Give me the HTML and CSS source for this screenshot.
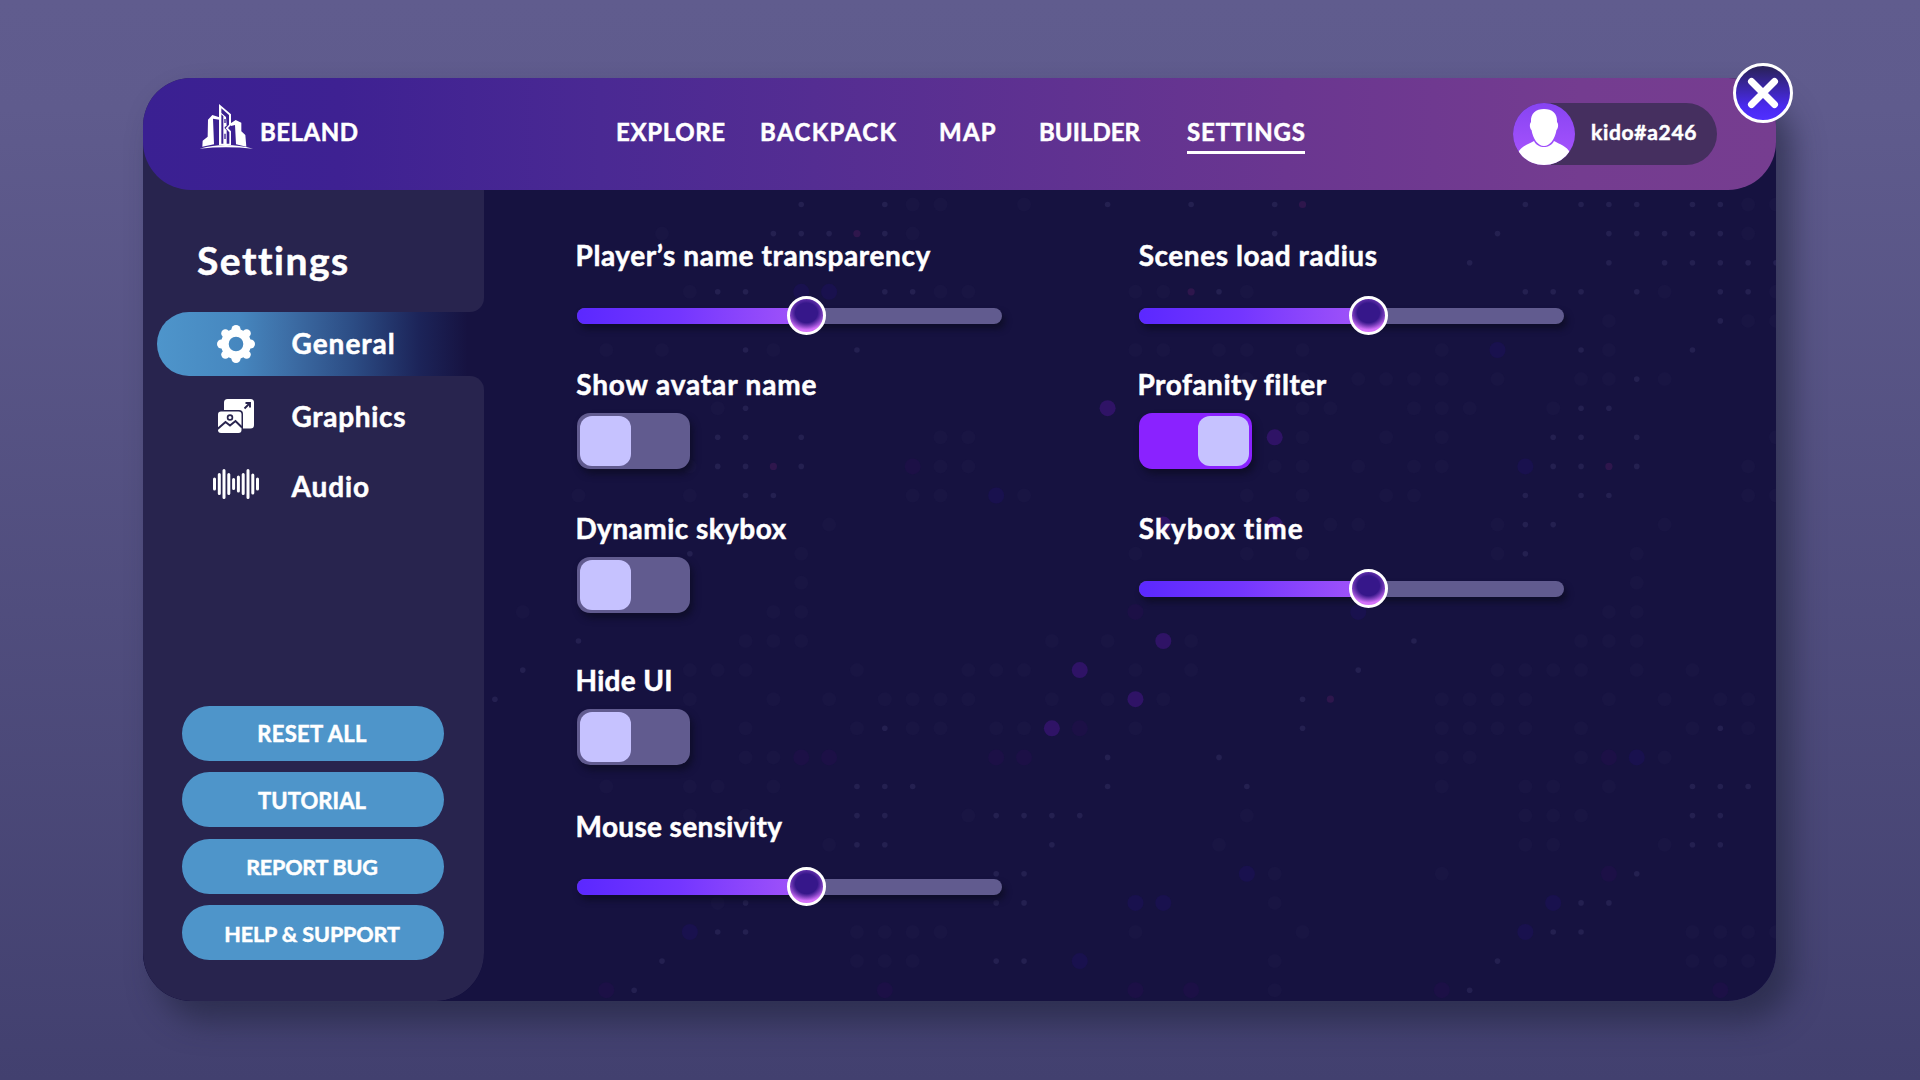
FILE: index.html
```html
<!DOCTYPE html>
<html lang="en">
<head>
<meta charset="utf-8">
<title>Beland – Settings</title>
<link rel="stylesheet" href="styles.css">
</head>
<body>
<div class="panel">
  <header class="topbar">
    <a class="brand">
      <svg class="brand-logo" viewBox="210 128 165 140" aria-hidden="true">
        <g fill="#fff">
          <path d="M237 178 250 164 271 171V178L252 175 255 252 220 259 221 241 236 229Z"/>
          <path d="M303 190 320 179 337 187V213L349 224 352 259 321 252 318 194 306 197Z"/>
          <path d="M270 131 306 162V194L297 203 306 213V254H270ZM277 144V250H283V168L277 162V158L291 170 293 196 287 200V204L293 210V250H301V216L290 204 300 193V164Z" fill-rule="evenodd"/>
          <path d="M212 265Q290 243 372 265Q290 257 212 265Z"/>
        </g>
        <path d="M288 176V188M288 220V236" stroke="#3b1f90" stroke-width="4"/>
      </svg>
      <span class="brand-name">BELAND</span>
    </a>
    <nav class="nav">
      <a class="nav-link explore">EXPLORE</a>
      <a class="nav-link backpack">BACKPACK</a>
      <a class="nav-link map">MAP</a>
      <a class="nav-link builder">BUILDER</a>
      <a class="nav-link settings is-active">SETTINGS</a>
    </nav>
    <div class="user">
      <svg class="avatar" viewBox="0 0 62 62" aria-hidden="true">
        <defs>
          <linearGradient id="av" x1="0" y1="0" x2="0" y2="1"><stop offset="0" stop-color="#8744f2"/><stop offset="1" stop-color="#ab55ff"/></linearGradient>
          <clipPath id="avc"><circle cx="31" cy="31" r="31"/></clipPath>
        </defs>
        <circle cx="31" cy="31" r="31" fill="url(#av)"/>
        <path clip-path="url(#avc)" fill="#fff" d="M5 50C8 43 16 41 21 38C25 46 37 46 41 38C46 41 54 43 57 50V62H5Z"/>
        <path fill="#fff" d="M31 6C39 6 44.500 10 44 19C46 21 45 26 43.500 27C42 36 37 43 31 43C25 43 20 36 18.500 27C17 26 16 21 18 19C17.500 10 23 6 31 6Z"/>
      </svg>
      <span class="user-name">kido#a246</span>
    </div>
  </header>

  <aside class="sidebar">
    <div class="sidebar-head"><h1 class="title">Settings</h1></div>
    <div class="tab-slot">
      <a class="tab is-active">
        <svg class="tab-icon" viewBox="-24 -24 48 48" aria-hidden="true">
          <circle r="11.200" fill="none" stroke="#fff" stroke-width="7.800"/>
          <g fill="#fff"><circle cy="-14.400" r="4.600"/><circle cy="14.400" r="4.600"/><circle cx="-14.400" r="4.600"/><circle cx="14.400" r="4.600"/><circle cx="10.600" cy="10.600" r="4.200"/><circle cx="-10.600" cy="10.600" r="4.200"/><circle cx="10.600" cy="-10.600" r="4.200"/><circle cx="-10.600" cy="-10.600" r="4.200"/></g>
        </svg>
        <span class="tab-label general">General</span>
      </a>
    </div>
    <div class="sidebar-body">
      <a class="tab">
        <svg class="tab-icon" viewBox="-24 -24 48 48" aria-hidden="true">
          <rect x="-12" y="-17" width="30" height="29.500" rx="3.500" fill="#fff"/>
          <path d="M8.500-7.500 13.500-12.500M9.500-13H14V-8.500" fill="none" stroke="#28244e" stroke-width="1.900"/>
          <rect x="-19" y="-6" width="26" height="24" rx="4" fill="#28244e"/>
          <rect x="-18" y="-4.500" width="23.500" height="21.500" rx="3" fill="#fff"/>
          <path d="M-18.500 13-10.500 6-6 9.500-.5 5 6 11.500" fill="none" stroke="#28244e" stroke-width="2"/>
          <circle cx="-6" cy="1.500" r="2.400" fill="none" stroke="#28244e" stroke-width="1.700"/>
        </svg>
        <span class="tab-label graphics">Graphics</span>
      </a>
      <a class="tab audio-tab">
        <svg class="tab-icon" viewBox="-24 -24 48 48" aria-hidden="true">
          <path d="M-21.500-5V5M-16.700-9.500V9.500M-12-13.500V13.500M-7.200-9.500V9.500M-2.400-4.500V4.500M2.400-7V7M7.200-9.500V9.500M12-13.500V13.500M16.800-9V9M21.500-5V5" stroke="#fff" stroke-width="3" stroke-linecap="round"/>
        </svg>
        <span class="tab-label audio">Audio</span>
      </a>
      <div class="actions">
        <button class="action reset">RESET ALL</button>
        <button class="action tutorial">TUTORIAL</button>
        <button class="action report">REPORT BUG</button>
        <button class="action help">HELP &amp; SUPPORT</button>
      </div>
    </div>
  </aside>

  <main class="content">
    <svg class="dots" viewBox="484 190 1292 811" aria-hidden="true"></svg>
    <section class="settings-grid">
      <div class="setting"><h2 class="label l-name">Player’s name transparency</h2>
        <div class="slider"><div class="slider-fill"></div><div class="slider-knob"></div></div></div>
      <div class="setting"><h2 class="label l-radius">Scenes load radius</h2>
        <div class="slider"><div class="slider-fill"></div><div class="slider-knob"></div></div></div>
      <div class="setting"><h2 class="label l-avatar">Show avatar name</h2>
        <div class="toggle"><div class="toggle-knob"></div></div></div>
      <div class="setting"><h2 class="label l-filter">Profanity filter</h2>
        <div class="toggle is-on"><div class="toggle-knob"></div></div></div>
      <div class="setting"><h2 class="label l-dynamic">Dynamic skybox</h2>
        <div class="toggle"><div class="toggle-knob"></div></div></div>
      <div class="setting"><h2 class="label l-time">Skybox time</h2>
        <div class="slider"><div class="slider-fill"></div><div class="slider-knob"></div></div></div>
      <div class="setting first-col"><h2 class="label l-hide">Hide UI</h2>
        <div class="toggle"><div class="toggle-knob"></div></div></div>
      <div class="setting first-col"><h2 class="label l-mouse">Mouse sensivity</h2>
        <div class="slider"><div class="slider-fill"></div><div class="slider-knob"></div></div></div>
    </section>
  </main>

  <button class="close" aria-label="Close">
    <svg viewBox="0 0 60 60" aria-hidden="true"><path d="M18.500 18.500 41.500 41.500M41.500 18.500 18.500 41.500" stroke="#fff" stroke-width="7" stroke-linecap="round"/></svg>
  </button>
</div>
<script src="dots.js"></script>
</body>
</html>
```
FILE: dots.js
```js
// Halftone backdrop: each row lists column index + dot kind.
// f faint, t tiny, b blue, p dim purple, s small purple, x bright purple
const STEP_X = 27.85, STEP_Y = 29.1, ORIGIN_X = 1107.6, ORIGIN_Y = 641;
const KINDS = {
  f: [7, '#191543'], t: [2.8, '#242050'], b: [8, '#19114e'],
  p: [8, '#1c1046'], s: [3.6, '#2e164c'], x: [8, '#2f1366']
};
const ROWS = {
  '-15': '-11t -8t -7f -6f -3f 0t 3t 6t 7s 15t 17t 18t 19t 21t 22t 23f 24f',
  '-14': '-16f -12t -11t -10t -9s -8t -7f 6t 14t 18t 19t 20t 21t 22t 23f',
  '-13': '13t 18t 20t 21t 22t 23t 24t',
  '-12': '-15f -14t -13t -11b -10b -8t -7t -6f -5f 1f 2f 3s 4t 5f 15t 16t 17t 19t 20f 22t 23t 24f',
  '-11': '18f 22t 23f 24f',
  '-10': '-18f -16f -13t -12f -9t 1f 2f 4f 5f 7f 12f 14b 17t 18f 21t',
  '-9': '5f 7f 9f 10f 11f 12f 14f 17f 18f 19t 20f',
  '-8': '-14f -13t 0x 7f 8f 11f 12f 13f 16f 17t 18t',
  '-7': '-14t -13t -11t -6f -5f 6x 7f 10f 12f 16t 17t 19t 24f',
  '-6': '-15f -14t -13t -12s -11t -7p -6f -5f 6f 7f 9f 11f 12f 15b 16t 17t 18s 19t 23f',
  '-5': '-19f -15f -13t -12t -7f -6f -4b -3f 5f 7f 10f 11f 15t 17t 18t 23f 24f',
  '-4': '-10f 2x 6x 8f 9f 14f 15t 16t 20f',
  '-3': '-15t -11f 1f 5f 7f 14f 15t 19f',
  '-2': '-11f 19f',
  '-1': '-21f -12f -11f 1p 9b 18f 19f',
  '0': '-19t -13f -12f -11f -2f 0f 2x 3f 11t 17f 18f 19f',
  '1': '-21t -15f -14f -13f -9f -5f -4f -3f -1x 1f 3f 9t 14f 15f 16f 17f 19f 21f',
  '2': '-22t -15f -12f -10f -8f -7f -6f -5f -2f 0f 1x 2f 7t 8s 12f 13f 14f 15f 18f 20f 22f 23f',
  '3': '-13f -9f -8t -7f -6f -4f -3f -2x -1p 1f 7t 12f 13f 14f 15f 17f 21f 22t 23f',
  '4': '-13f -12f -11p -10p -4p -3p 0t 4t 12f 13f 17f 18p 19b 20f',
  '5': '-18f -15f -14f -12f -9t -8t -7t 0t 5t 12f 15f 16f 18f 21t 22t 23t',
  '6': '-15f -13f -9t -8t -5f -4t -3t -2t -1t 5f 15f 16f 17f 21t 22t',
  '7': '-10f -9t -8t -2t 4f 15f 16f 20f 21t 22t',
  '8': '-4t -3t 5b 6f 12f 18p 19t',
  '9': '-14f -13t -4t -3t 1b 2b 6f 16b 17t 18t',
  '10': '-15b -14t -13t -9f -8f -7f -6f 1f 7f 15b 16t 17t 21f 22f 23f 24f',
  '11': '-16t -9f -8f -7f -4t -3t -1b 6f 14t 21f 22f 23f',
  '12': '-18p -17t -8p 1p 3p 6f 12p 13t 22p'
};
const layer = document.querySelector('.dots');
for (const [row, cells] of Object.entries(ROWS)) {
  for (const cell of cells.split(' ')) {
    const [r, fill] = KINDS[cell.slice(-1)];
    const dot = document.createElementNS('http://www.w3.org/2000/svg', 'circle');
    dot.setAttribute('cx', ORIGIN_X + STEP_X * parseInt(cell, 10));
    dot.setAttribute('cy', ORIGIN_Y + STEP_Y * row);
    dot.setAttribute('r', r);
    dot.setAttribute('fill', fill);
    layer.append(dot);
  }
}
```
FILE: styles.css
```css
* { box-sizing: border-box; }
body {
  margin: 0;
  width: 1920px;
  height: 1080px;
  overflow: hidden;
  padding: 78px 144px 79px 143px;
  background: linear-gradient(#605c8e 0%, #5f5b8d 10%, #42406f 100%);
  font-family: Lato, "Open Sans", sans-serif;
  font-weight: 700;
  font-variant-ligatures: none;
  color: #fff;
  -webkit-text-stroke: .5px #fff;
}
h1, h2 { margin: 0; font-weight: inherit; }
button { border: 0; padding: 0; font: inherit; color: inherit; }

.panel {
  position: relative;
  display: grid;
  grid-template: 112px 1fr / 341px 1fr;
  width: 1633px;
  height: 923px;
  border-radius: 48px;
  background: linear-gradient(90deg, #28244e 80px, #161240 80px);
  box-shadow: 16px 20px 30px rgba(32, 36, 62, .62);
}

.topbar {
  grid-column: 1 / -1;
  display: flex;
  align-items: center;
  border-radius: 48px;
  padding: 0 59px 0 57px;
  background: linear-gradient(90deg, #3a2092 0%, #3e2192 12%, #4a2993 28%, #6a3690 70%, #743c90 88%, #763d90 100%);
}
.brand { display: flex; align-items: flex-start; width: 416px; }
.brand-logo { width: 55px; height: 46.700px; margin: -15px 0 0 -1px; }
.brand-name { margin: -1px 0 0 6px; font-size: 24px; line-height: 30px; letter-spacing: .5px; }
.nav { display: flex; font-size: 24px; line-height: 30px; margin-top: -4px; }
.nav-link { position: relative; white-space: nowrap; }
.explore { width: 144px; letter-spacing: .65px; }
.backpack { width: 179px; letter-spacing: 1.400px; }
.map { width: 100px; letter-spacing: 1.200px; }
.builder { width: 148px; letter-spacing: .05px; }
.settings { letter-spacing: .85px; }
.settings.is-active::after {
  content: "";
  position: absolute;
  left: 0;
  top: 34px;
  width: 118px;
  height: 3px;
  background: #fff;
}
.user {
  display: flex;
  align-items: center;
  margin-left: auto;
  width: 204px;
  height: 62px;
  border-radius: 31px;
  background: #452f5f;
}
.avatar { width: 62px; height: 62px; }
.user-name { margin: -4px 0 0 16px; font-size: 21px; line-height: 26px; letter-spacing: .7px; }

.sidebar { display: flex; flex-direction: column; border-radius: 0 0 48px 48px; background: #161240; overflow: hidden; }
.sidebar-head {
  height: 122px;
  padding: 48px 0 0 54px;
  background: #28244e;
  border-bottom-right-radius: 14px;
}
.title { font-size: 39px; line-height: 44px; letter-spacing: 1.500px; }
.tab-slot { height: 64px; padding-left: 14px; background: linear-gradient(90deg, #28244e 60px, #161240 60px); }
.tab { display: flex; align-items: center; height: 64px; padding-left: 69px; }
.tab-slot .tab {
  padding-left: 55px;
  border-radius: 32px 0 0 32px;
  background: linear-gradient(90deg, #4e95cb 0%, #4687bf 25%, #3d6ea6 40%, #2c4c84 60%, #1c2459 80%, #161240 95%);
}
.tab-icon { width: 48px; height: 48px; }
.tab-label { margin: -2px 0 0 31.500px; font-size: 28px; line-height: 34px; }
.general { letter-spacing: 1px; }
.graphics { margin-top: 0; letter-spacing: .7px; }
.audio { margin-top: 4px; letter-spacing: .9px; }
.sidebar-body {
  flex: 1;
  display: flex;
  flex-direction: column;
  padding: 8px 0 41px;
  background: #28244e;
  border-radius: 0 14px 48px 48px;
}
.audio-tab { margin-top: 4px; }
.actions { display: flex; flex-direction: column; gap: 11.400px; margin-top: auto; padding: 0 40px 0 39px; }
.action { height: 55px; padding: 2px 2px 0 0; border-radius: 28px; background: #4e95ca; font-size: 22px; line-height: 30px; }
.reset { letter-spacing: .3px; }
.tutorial { letter-spacing: .1px; }
.report { font-size: 21.500px; letter-spacing: -.2px; }
.help { font-size: 21.500px; letter-spacing: -.1px; }

.content { position: relative; border-bottom-right-radius: 48px; overflow: hidden; }
.dots { position: absolute; left: 0; top: 0; width: 1292px; height: 811px; }
.settings-grid {
  position: relative;
  display: grid;
  grid-template: 129px 144px 152px 146px / 562px 426px;
  padding: 49px 0 0 93px;
}
.first-col { grid-column: 1; }
.label { margin-left: -1.500px; font-size: 28px; line-height: 32px; white-space: nowrap; }
.l-name { letter-spacing: .6px; }
.l-radius { margin-left: -.3px; letter-spacing: .55px; }
.l-avatar { margin-left: -.8px; letter-spacing: .85px; }
.l-filter { letter-spacing: .5px; }
.l-dynamic { letter-spacing: .45px; }
.l-time { margin-left: -.3px; letter-spacing: 1.050px; }
.l-hide { letter-spacing: .3px; }
.l-mouse { letter-spacing: .35px; }
.slider {
  position: relative;
  width: 425px;
  height: 16px;
  margin-top: 36.500px;
  border-radius: 8px;
  background: #615b8f;
  box-shadow: 3px 5px 6px rgba(12, 12, 34, .75);
}
.slider-fill { width: 229px; height: 16px; border-radius: 8px 0 0 8px; background: linear-gradient(90deg, #5b28ff, #7436ff 45%, #a355f8); }
.slider-knob {
  position: absolute;
  left: 210px;
  top: -11.500px;
  width: 39px;
  height: 39px;
  border: 3px solid #fff;
  border-radius: 50%;
  background:
    radial-gradient(ellipse 19px 17px at 50% 42%, #36178a 58%, rgba(54, 23, 138, 0) 100%),
    linear-gradient(#7a3cc0, #a455dc 50%, #d472fa 90%);
}
.toggle {
  width: 113px;
  height: 56px;
  margin-top: 13px;
  padding: 3px;
  border-radius: 13px;
  background: #615b8f;
  box-shadow: 3px 5px 7px rgba(12, 12, 34, .75);
}
.toggle-knob { width: 51px; height: 50px; border-radius: 12px; background: #c6c2ff; }
.toggle.is-on { background: #8a22ff; }
.toggle.is-on .toggle-knob { margin-left: auto; }

.close {
  position: absolute;
  left: 1589.500px;
  top: -15.500px;
  width: 60px;
  height: 60px;
  border: 3px solid #fff;
  border-radius: 50%;
  background: linear-gradient(#2b2260 5%, #4a2af0 75%, #5030ff);
}
.close svg { display: block; width: 60px; height: 60px; margin: -3px; }
```
